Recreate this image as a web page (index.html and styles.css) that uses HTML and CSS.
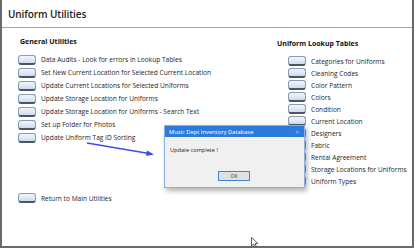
FILE: index.html
```html
<!DOCTYPE html>
<html lang="en">
<head>
    <meta charset="UTF-8">
    <title>Uniform Utilities</title>
    <link rel="stylesheet" href="styles.css">
</head>
<body>

    <div class="frame">
        <header class="form-header">
            <h1>Uniform Utilities</h1>
        </header>

        <main class="form-body">
            <section class="col general">
                <h2>General Utilities</h2>
                <ul class="cmd-list">
                    <li><button class="cmd"></button><span>Data Audits - Look for errors in Lookup Tables</span></li>
                    <li><button class="cmd"></button><span>Set New Current Location for Selected Current Location</span></li>
                    <li><button class="cmd"></button><span>Update Current Locations for Selected Uniforms</span></li>
                    <li><button class="cmd"></button><span>Update Storage Location for Uniforms</span></li>
                    <li><button class="cmd"></button><span>Update Storage Location for Uniforms - Search Text</span></li>
                    <li><button class="cmd"></button><span>Set up Folder for Photos</span></li>
                    <li><button class="cmd"></button><span>Update Uniform Tag ID Sorting</span></li>
                </ul>
                <div class="return-row">
                    <button class="cmd"></button><span>Return to Main Utilities</span>
                </div>
            </section>

            <section class="col lookup">
                <h2>Uniform Lookup Tables</h2>
                <ul class="cmd-list">
                    <li><button class="cmd"></button><span>Categories for Uniforms</span></li>
                    <li><button class="cmd"></button><span>Cleaning Codes</span></li>
                    <li><button class="cmd"></button><span>Color Pattern</span></li>
                    <li><button class="cmd"></button><span>Colors</span></li>
                    <li><button class="cmd"></button><span>Condition</span></li>
                    <li><button class="cmd"></button><span>Current Location</span></li>
                    <li><button class="cmd"></button><span>Designers</span></li>
                    <li><button class="cmd"></button><span>Fabric</span></li>
                    <li><button class="cmd"></button><span>Rental Agreement</span></li>
                    <li><button class="cmd"></button><span>Storage Locations for Uniforms</span></li>
                    <li><button class="cmd"></button><span>Uniform Types</span></li>
                </ul>
            </section>
        </main>

        <!-- annotation arrow pointing at the message box -->
        <svg class="arrow" width="80" height="20" viewBox="0 0 80 20">
            <line x1="1" y1="3" x2="66" y2="14" stroke="#3a4ee6" stroke-width="1.3"/>
            <polygon points="68,14.4 61,10.5 60,16" fill="#3a4ee6"/>
        </svg>

        <div class="msgbox">
            <div class="msgbox-title">
                <span>Music Dept Inventory Database</span>
                <span class="msgbox-close">&#x2715;</span>
            </div>
            <div class="msgbox-body">
                <p>Update complete !</p>
                <div class="msgbox-actions">
                    <button class="ok-btn">OK</button>
                </div>
            </div>
        </div>

        <svg class="cursor" width="8" height="11" viewBox="0 0 8 11">
            <path d="M0.5 0.5 L0.5 9 L2.6 7 L4 10.3 L5.4 9.7 L4.1 6.6 L7 6.6 Z" fill="#fff" stroke="#333" stroke-width="0.8"/>
        </svg>
    </div>

</body>
</html>
```

FILE: styles.css
```css
/* General styling */
body {
    margin: 0;
    padding: 0;
    background: #fff;
    font-family: 'Open Sans', 'Noto Sans', sans-serif;
    color: #1e1e1e;
}

.frame {
    position: relative;
    width: 410px;
    height: 246px;
    border-left: 2px solid #6a6a6a;
    border-right: 2px solid #6a6a6a;
    border-bottom: 2px solid #6a6a6a;
    overflow: hidden;
}

.form-header {
    height: 27px;
    border-bottom: 1px solid #a3a3a3;
    display: flex;
    align-items: center;
    padding-left: 6px;
}

h1 {
    margin: 0;
    font-size: 10px;
    font-weight: 600;
    letter-spacing: -0.1px;
    color: #222;
}

.form-body {
    display: flex;
}

.col h2 {
    margin: 0;
    font-size: 7px;
    font-weight: 700;
    color: #111;
    line-height: 9px;
}

.general {
    padding: 9px 0 0 16px;
    width: 259px;
}

.general h2 {
    padding-left: 2px;
    margin-bottom: 7px;
}

.lookup {
    padding: 11px 0 0 0;
}

.lookup h2 {
    margin-bottom: 7px;
}

.cmd-list {
    list-style: none;
    margin: 0;
    padding: 0;
}

.cmd-list li {
    display: flex;
    align-items: center;
    gap: 5px;
    height: 13px;
    font-size: 6.6px;
}

.lookup .cmd-list {
    padding-left: 11px;
}

.lookup .cmd-list li {
    height: 12px;
}

.cmd {
    width: 18px;
    height: 10px;
    padding: 0;
    border: 1px solid #8a9bb3;
    border-bottom: 2px solid #4a5566;
    border-radius: 3px;
    background: linear-gradient(#f2f6fc, #cfdcee);
    flex-shrink: 0;
}

.return-row {
    display: flex;
    align-items: center;
    gap: 5px;
    margin-top: 49px;
    font-size: 6.6px;
}

/* annotation arrow */
.arrow {
    position: absolute;
    left: 84px;
    top: 140px;
}

/* message box */
.msgbox {
    position: absolute;
    left: 162px;
    top: 125px;
    width: 139px;
    height: 61px;
    border: 1px solid #8eb0df;
    background: #f0f0f0;
    box-shadow: 2px 3px 5px rgba(0, 0, 0, 0.3);
    display: flex;
    flex-direction: column;
}

.msgbox-title {
    height: 11px;
    background: #2d7bd8;
    color: #fff;
    font-size: 5.8px;
    display: flex;
    align-items: center;
    justify-content: space-between;
    padding: 0 5px 0 4px;
}

.msgbox-close {
    color: #9cc0ec;
    font-size: 5px;
}

.msgbox-body {
    flex: 1;
    display: flex;
    flex-direction: column;
    padding: 9px 0 0 5px;
}

.msgbox-body p {
    margin: 0;
    font-size: 5.6px;
    color: #222;
}

.msgbox-actions {
    margin-top: auto;
    margin-bottom: 6px;
    display: flex;
    justify-content: center;
    padding-right: 6px;
}

.ok-btn {
    width: 32px;
    height: 10px;
    padding: 0;
    border: 1px solid #3d84d6;
    background: #e1e1e1;
    font-family: 'Open Sans', sans-serif;
    font-size: 5px;
    color: #333;
}

.cursor {
    position: absolute;
    left: 249px;
    top: 237px;
}
```
